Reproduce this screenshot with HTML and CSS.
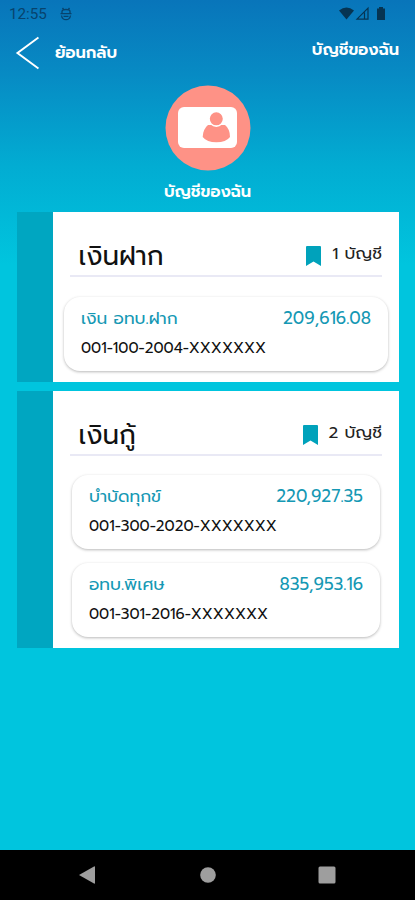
FILE: index.html
```html
<!DOCTYPE html>
<html lang="th">
<head>
<meta charset="utf-8">
<meta name="viewport" content="width=device-width, initial-scale=1">
<title>บัญชีของฉัน</title>
<link rel="stylesheet" href="styles.css">
</head>
<body>
<div class="screen">
  <div class="status">
    <span class="clock">12:55</span>
    <svg class="notif" width="12" height="14" viewBox="0 0 12 14"><path d="M.5 6.700h11M2 6.500V4.500Q2 2.500 6 2.500T10 4.500V6.500M1.500 8.500c.4 2.500 2 4.200 4.500 4.200s4.100-1.700 4.500-4.200M3.500 9.300h5M2.500 1l1.500 2M9.500 1L8 3"/></svg>
    <svg class="signals" width="48" height="16" viewBox="0 0 48 16"><path d="M0 4.500Q7.500-1.500 15 4.500L7.500 13.500z"/><path class="outline" d="M18 13.200h11V2.200zM25.500 6.500v6.500"/><path d="M38 2.500h2V1h4v1.500h2v11.500h-8z"/></svg>
  </div>
  <header class="header">
    <div class="back">
      <svg width="24" height="34" viewBox="0 0 24 34"><path d="M23.500 1.500L2.500 17 23.500 32.500"/></svg>
      <span class="back-label">ย้อนกลับ</span>
    </div>
    <span class="title">บัญชีของฉัน</span>
  </header>
  <div class="profile">
    <svg width="86" height="86" viewBox="0 0 86 86"><circle cx="43" cy="43" r="42.500" fill="#fe9286"/><rect x="13" y="22" width="59" height="41" rx="6" fill="#fff"/><path fill="#fe9286" d="M43 40h17q5 4 5 12-4 5.300-13.600 5.300T37.700 52q.3-8 5.300-12z"/><circle cx="51.300" cy="33.800" r="7.300" fill="#fe9286" stroke="#fff" stroke-width="1.600"/></svg>
    <span class="profile-name">บัญชีของฉัน</span>
  </div>
  <main class="sections">
    <section class="section deposits">
      <div class="panel">
        <div class="heading">
          <h2>เงินฝาก</h2>
          <div class="count"><svg width="15" height="20" viewBox="0 0 15 20"><path d="M1 0h13q1 0 1 1v19l-7.500-4.500L0 20V1q0-1 1-1z"/></svg><span>1 บัญชี</span></div>
        </div>
        <article class="card">
          <div class="row"><span class="name">เงิน อทบ.ฝาก</span><span class="amount">209,616.08</span></div>
          <div class="number">001-100-2004-XXXXXXX</div>
        </article>
      </div>
    </section>
    <section class="section loans">
      <div class="panel">
        <div class="heading">
          <h2>เงินกู้</h2>
          <div class="count"><svg width="15" height="20" viewBox="0 0 15 20"><path d="M1 0h13q1 0 1 1v19l-7.500-4.500L0 20V1q0-1 1-1z"/></svg><span>2 บัญชี</span></div>
        </div>
        <article class="card">
          <div class="row"><span class="name">บำบัดทุกข์</span><span class="amount">220,927.35</span></div>
          <div class="number">001-300-2020-XXXXXXX</div>
        </article>
        <article class="card">
          <div class="row"><span class="name">อทบ.พิเศษ</span><span class="amount">835,953.16</span></div>
          <div class="number">001-301-2016-XXXXXXX</div>
        </article>
      </div>
    </section>
  </main>
  <nav class="navbar">
    <svg width="18" height="18" viewBox="0 0 18 18"><path d="M0 9L15 .5q1-.5 1 .5v16q0 1-1 .5z"/></svg>
    <svg width="18" height="18" viewBox="0 0 18 18"><circle cx="9" cy="9" r="7.800"/></svg>
    <svg width="18" height="18" viewBox="0 0 18 18"><rect x=".5" y=".5" width="17" height="17" rx="1.500"/></svg>
  </nav>
</div>
</body>
</html>
```
FILE: styles.css
```css
* { box-sizing: border-box; }
body { margin: 0; font-family: "Prompt", Lato, "Noto Sans Thai", sans-serif; }
svg { display: block; flex: none; }
.screen {
  width: 415px;
  height: 900px;
  display: flex;
  flex-direction: column;
  overflow: hidden;
  background: linear-gradient(#0875ba 0, #078bc4 75px, #02acd2 165px, #00c5de 265px);
}
.status { height: 28px; display: flex; align-items: center; padding: 0 28px 0 9px; }
.clock { width: 51px; font: 15.200px/28px Roboto, sans-serif; color: #07436d; }
.notif { fill: none; stroke: #07436d; stroke-width: 1.300; }
.signals { margin-left: auto; fill: #063452; }
.signals .outline { fill: none; stroke: #063452; stroke-width: 1.200; }
.header { height: 57px; display: flex; justify-content: space-between; padding: 8px 16px 0 15px; color: #fff; }
.back { display: flex; height: 34px; gap: 16px; }
.back svg { fill: none; stroke: #fff; stroke-width: 2; }
.back-label, .title, .profile-name { font-size: 16.200px; font-weight: 600; line-height: 34px; white-space: nowrap; }
.title { line-height: 28px; }
.profile { height: 127px; display: flex; flex-direction: column; align-items: center; color: #fff; }
.profile-name { line-height: 41px; }
.sections { display: flex; flex-direction: column; gap: 9px; padding: 0 16px 0 17px; }
.section { padding-left: 36px; background: #00a6c1; }
.panel { background: #fff; height: 100%; }
.deposits { height: 170px; }
.loans { height: 257px; }
.heading { height: 65px; margin: 0 17px 0 17px; padding: 26px 0 0 8.500px; display: flex; justify-content: space-between; border-bottom: 2px solid #e9e9f5; }
h2 { margin: 0; font-size: 26.200px; font-weight: 400; line-height: 36px; color: #111; }
.count { display: flex; gap: 11px; font-size: 16.800px; line-height: 32px; color: #222; }
.count svg { margin-top: 8px; fill: #00a2bb; }
.card { height: 74px; padding: 10px 17px; border-radius: 16px; background: #fff; box-shadow: 0 1px 3px rgba(0, 0, 0, .28); }
.deposits .card { margin: 20px 11px 0; }
.loans .card { margin: 19px 19px 0; }
.loans .card + .card { margin-top: 14px; }
.row { height: 24px; display: flex; justify-content: space-between; color: #1598b4; font-size: 17px; line-height: 22px; white-space: nowrap; }
.number { font-size: 15.050px; line-height: 34px; color: #111; white-space: nowrap; }
.navbar { height: 50px; margin-top: auto; padding: 0 79px; display: flex; align-items: center; justify-content: space-between; background: #000; }
.navbar svg { fill: #9e9e9e; }
```
